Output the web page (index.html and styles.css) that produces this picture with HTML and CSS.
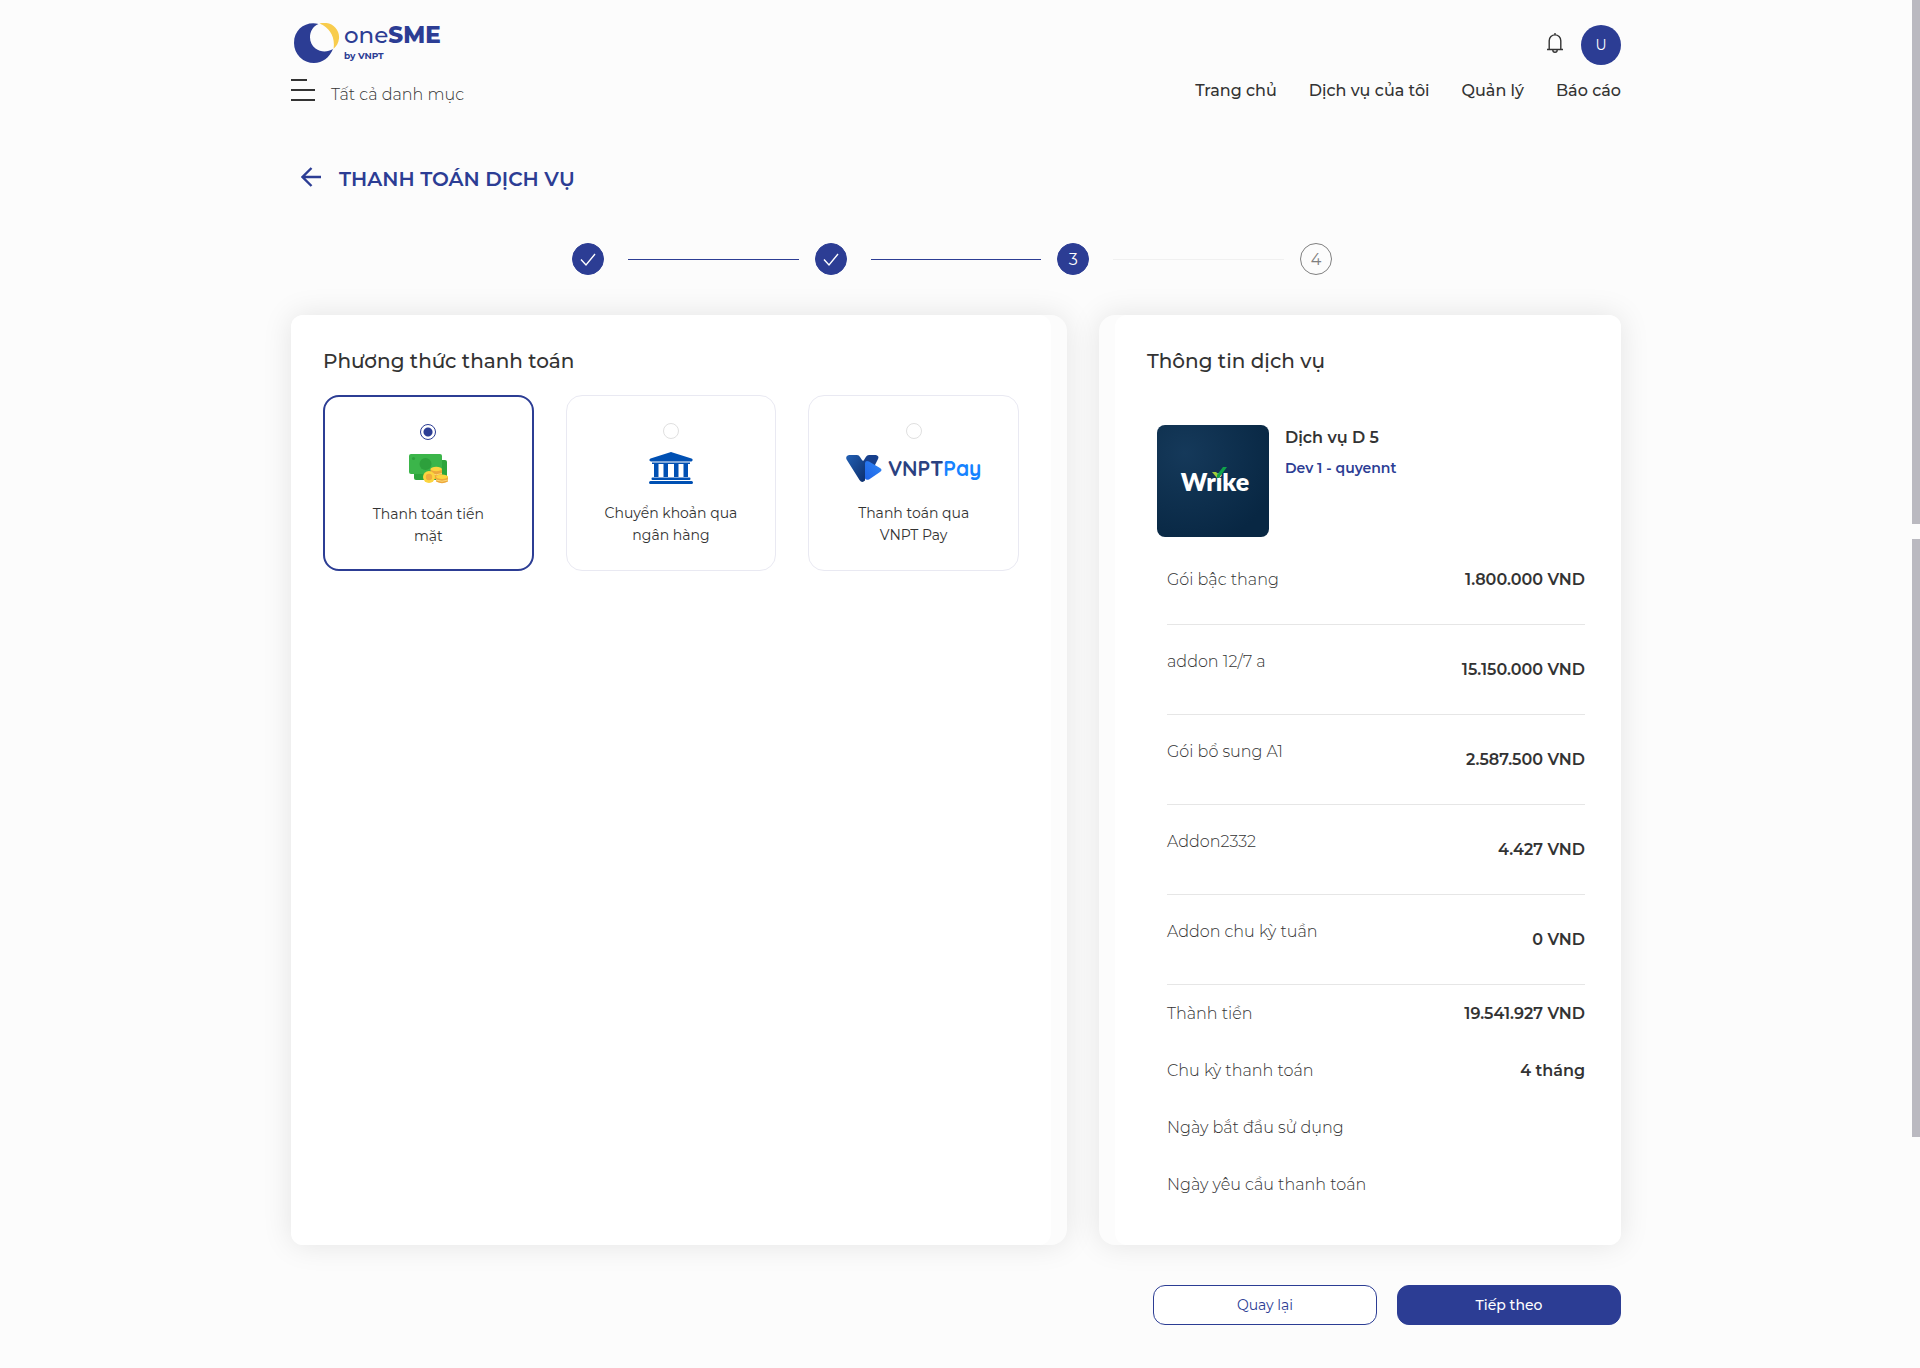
FILE: index.html
```html
<!DOCTYPE html>
<html lang="vi">
<head>
  <meta charset="utf-8">
  <meta name="viewport" content="width=device-width, initial-scale=1">
  <title>oneSME - Thanh toán dịch vụ</title>
  <link rel="stylesheet" href="styles.css">
</head>
<body>
  <div class="container">
    <header class="header">
      <div class="header-top">
        <a class="logo" href="#">
          <svg class="logo-mark" viewBox="0 0 46 40" aria-hidden="true">
            <path fill="#f8cc4d" d="M25.500 .5C36-2.500 46 5 45 15.500C44.500 20 42.500 23.500 39.500 25.800C41.500 14 36 5 25.500 .5Z"/>
            <path fill="#2c3d94" d="M24.500 1C14 5.500 13.500 20 21.500 25.500C27 29.500 34 29 39 26C35.500 34.500 28.500 40 20 40A20 20 0 0 1 0 20C0 6 12-2 24.500 1Z"/>
          </svg>
          <span class="logo-text">
            <span class="logo-name">one<b>SME</b></span>
            <span class="logo-by">by VNPT</span>
          </span>
        </a>
        <div class="account">
          <button class="bell" type="button" aria-label="Thông báo">
            <svg viewBox="0 0 16 20" width="16" height="20" fill="none" stroke="#333" stroke-width="1.400" aria-hidden="true">
              <path d="M8 0v2M0 16.500h16M2.200 16.500V7.700a5.800 5.800 0 0 1 11.600 0v8.800M5.800 17a2.200 2.200 0 0 0 4.400 0"/>
            </svg>
          </button>
          <button class="avatar" type="button">U</button>
        </div>
      </div>
      <div class="header-bottom">
        <button class="categories" type="button">
          <svg viewBox="0 0 24 22" width="24" height="22" stroke="#333" stroke-width="2" aria-hidden="true">
            <path d="M0 1h16M0 11h24M0 21h24"/>
          </svg>
          <span>Tất cả danh mục</span>
        </button>
        <nav class="nav">
          <a href="#">Trang chủ</a>
          <a href="#">Dịch vụ của tôi</a>
          <a href="#">Quản lý</a>
          <a href="#">Báo cáo</a>
        </nav>
      </div>
    </header>

    <main>
      <div class="page-title">
        <a class="back" href="#" aria-label="Trở về">
          <svg viewBox="0 0 20 20" width="20" height="20" fill="none" stroke="#2c3d94" stroke-width="2.400" aria-hidden="true">
            <path d="M20 10H2M10.500 1L1.500 10l9 9"/>
          </svg>
        </a>
        <h1>THANH TOÁN DỊCH VỤ</h1>
      </div>

      <ol class="steps">
        <li class="step done">
          <span class="dot"><svg viewBox="0 0 16 14" width="16" height="14" aria-label="Hoàn thành"><path d="M1 6.500l5 5.500L15 1"/></svg></span>
        </li>
        <li class="step done">
          <span class="dot"><svg viewBox="0 0 16 14" width="16" height="14" aria-label="Hoàn thành"><path d="M1 6.500l5 5.500L15 1"/></svg></span>
        </li>
        <li class="step current"><span class="dot">3</span></li>
        <li class="step"><span class="dot">4</span></li>
      </ol>

      <form class="checkout">
        <div class="columns">
          <section class="card card-methods">
            <div class="panel">
              <h2>Phương thức thanh toán</h2>
              <div class="methods">
                <label class="method">
                  <input type="radio" name="method" checked>
                  <svg class="method-icon" viewBox="0 0 39 32" width="39" height="32" aria-hidden="true">
                    <rect x="5" y="7" width="33" height="20" rx="2" fill="#2da53c"/>
                    <rect x="0" y="1" width="33" height="20" rx="2" fill="#3bb54a"/>
                    <circle cx="16.500" cy="11" r="6" fill="#2da03c"/>
                    <circle cx="4.500" cy="5.500" r="1.600" fill="#2da03c"/>
                    <path fill="#eda93b" d="M21.500 16h11.500v10h-11.500z"/>
                    <ellipse cx="27.200" cy="16" rx="5.700" ry="2.200" fill="#fcd53f"/>
                    <path d="M21.500 20.500q5.700 2.500 11.500 0" stroke="#fcd878" fill="none"/>
                    <circle cx="20" cy="24" r="6" fill="#fcd53f"/>
                    <circle cx="20" cy="24" r="3.200" fill="#f0ac3c"/>
                    <path fill="#eda93b" d="M27 23.500h12v5q-6 3.500-12 0z"/>
                    <ellipse cx="33" cy="23.700" rx="6" ry="2.200" fill="#fcd53f"/>
                    <path d="M27 27q6 2.500 12 0" stroke="#fcd878" fill="none"/>
                  </svg>
                  <span class="method-name">Thanh toán tiền mặt</span>
                </label>
                <label class="method">
                  <input type="radio" name="method">
                  <svg class="method-icon" viewBox="0 0 44 32" width="44" height="32" fill="#0050b3" aria-hidden="true">
                    <path d="M20.500.4q1.500-.6 3 0L42.500 6.500q1.500.6 1 2t-2 1h-39q-1.500 0-2-1t1-2zM3 10.500h38v1.500H3zM5 12h4.500v13H5zM14.500 12h4.500v13h-4.500zM25 12h4.500v13H25zM34.500 12h4.500v13h-4.500zM3.500 25.500h37q1 0 1 1.200T40.500 28h-37q-1 0-1-1.300t1-1.200zM1.500 29h41q1.500 0 1.500 1.500T42.500 32h-41Q0 32 0 30.500T1.500 29z"/>
                  </svg>
                  <span class="method-name">Chuyển khoản qua ngân hàng</span>
                </label>
                <label class="method">
                  <input type="radio" name="method">
                  <span class="method-icon vnptpay">
                    <svg viewBox="0 0 36 27" width="36" height="27" aria-hidden="true">
                      <defs>
                        <linearGradient id="pay-v" x1="0" y1="0" x2="1" y2="1"><stop offset="0" stop-color="#2260b4"/><stop offset="1" stop-color="#0d2f6d"/></linearGradient>
                        <linearGradient id="pay-p" x1="1" y1="0" x2="0" y2="1"><stop offset="0" stop-color="#2f86f6"/><stop offset="1" stop-color="#1f63e6"/></linearGradient>
                      </defs>
                      <path fill="#173f8c" d="M14 5.500q2.500 2 4-.5L20 1.800Q21 0 23 0h7q3.500 1 2 4L28 12l-10 6z"/>
                      <path fill="url(#pay-v)" d="M3 0h8q2 0 3 2l2 3q1.500 2 3 1.200V25.500q-3 3-5.500-.5L.6 4.500Q-1 1 3 0z"/>
                      <path fill="url(#pay-p)" d="M19 8q.500-3 4-1.500l11 6.500q3 2 0 4l-11 7.500q-3 1-4-1z"/>
                    </svg>
                    <span>VNPT<em>Pay</em></span>
                  </span>
                  <span class="method-name">Thanh toán qua VNPT Pay</span>
                </label>
              </div>
            </div>
          </section>

          <section class="card card-service">
            <div class="panel">
              <h2>Thông tin dịch vụ</h2>
              <div class="service">
                <div class="thumb">
                  <span class="wrike">Wrike
                    <svg class="tick" viewBox="0 0 15 11" width="15" height="11" aria-hidden="true"><path fill="#a0ce3a" d="M0 5h4l3 3v3H5z"/><path fill="#0fa14a" d="M5 8l6-8h4L7 11H5z"/></svg>
                  </span>
                </div>
                <div class="service-text">
                  <h3>Dịch vụ D 5</h3>
                  <a href="#">Dev 1 - quyennt</a>
                </div>
              </div>
              <dl class="items">
                <div class="item item-first"><dt>Gói bậc thang</dt><dd>1.800.000 VND</dd></div>
                <div class="item"><dt>addon 12/7 a</dt><dd>15.150.000 VND</dd></div>
                <div class="item"><dt>Gói bổ sung A1</dt><dd>2.587.500 VND</dd></div>
                <div class="item"><dt>Addon2332</dt><dd>4.427 VND</dd></div>
                <div class="item"><dt>Addon chu kỳ tuần</dt><dd>0 VND</dd></div>
              </dl>
              <dl class="totals">
                <div class="total"><dt>Thành tiền</dt><dd>19.541.927 VND</dd></div>
                <div class="total"><dt>Chu kỳ thanh toán</dt><dd>4 tháng</dd></div>
                <div class="total"><dt>Ngày bắt đầu sử dụng</dt><dd></dd></div>
                <div class="total"><dt>Ngày yêu cầu thanh toán</dt><dd></dd></div>
              </dl>
            </div>
          </section>
        </div>

        <div class="actions">
          <button class="btn btn-outline" type="button">Quay lại</button>
          <button class="btn btn-primary" type="submit">Tiếp theo</button>
        </div>
      </form>
    </main>
  </div>
  <div class="rail" aria-hidden="true"><i class="rail-upper"></i><i class="rail-lower"></i></div>
</body>
</html>
```
FILE: styles.css
```css
:root {
  --primary: #2c3d94;
  --text: #333;
  --line: #e6e6e6;
}

* {
  box-sizing: border-box;
}

body {
  margin: 0;
  padding-right: 8px;
  background: #fcfcfc;
  color: var(--text);
  font: 400 16px/24px Montserrat, Inter, "Noto Sans", sans-serif;
}

h1, h2, h3, dl, dd, ol {
  margin: 0;
  padding: 0;
}

button {
  padding: 0;
  border: 0;
  background: none;
  color: inherit;
  font: inherit;
  cursor: pointer;
}

a {
  color: inherit;
  text-decoration: none;
}

svg {
  display: block;
  flex: none;
}

.container {
  max-width: 1330px;
  margin: 0 auto;
}

/* Header */
.header {
  padding-top: 23px;
}

.header-top,
.header-bottom {
  display: flex;
  justify-content: space-between;
}

.header-top {
  height: 44px;
}

.logo {
  display: flex;
  gap: 4px;
  padding-left: 3px;
  color: var(--primary);
}

.logo-mark {
  width: 46px;
  height: 40px;
}

.logo-text {
  display: flex;
  flex-direction: column;
}

.logo-name {
  font-size: 23px;
  font-weight: 500;
  line-height: 24px;
}

.logo-name b {
  font-weight: 800;
}

.logo-by {
  font-size: 9px;
  font-weight: 700;
  line-height: 17px;
}

.account {
  display: flex;
  align-items: center;
  gap: 18px;
}

.bell {
  padding-bottom: 4px;
}

.avatar {
  width: 40px;
  height: 40px;
  border-radius: 50%;
  background: var(--primary);
  color: #fff;
  font-size: 14px;
}

.header-bottom {
  align-items: center;
  height: 46px;
}

.categories {
  display: flex;
  align-items: center;
  gap: 16px;
  font-weight: 300;
}

.categories span {
  padding-top: 9px;
}

.nav {
  display: flex;
  gap: 32px;
  padding-top: 2px;
  font-weight: 500;
}

/* Title and steps */
.page-title {
  display: flex;
  align-items: center;
  gap: 18px;
  padding: 53px 0 0 10px;
}

.back {
  padding-bottom: 4px;
}

h1 {
  color: var(--primary);
  font-size: 20px;
  font-weight: 600;
  line-height: 26px;
}

.steps {
  display: flex;
  max-width: 800px;
  margin: 51px auto 40px;
  list-style: none;
}

.step {
  display: flex;
  flex: 1;
  align-items: center;
  gap: 24px;
  margin-left: 16px;
}

.step::after {
  content: "";
  flex: 1;
  height: 1px;
  background: #f0f0f0;
}

.step.done::after {
  background: var(--primary);
}

.step:last-child {
  flex: none;
}

.dot {
  display: flex;
  align-items: center;
  justify-content: center;
  width: 32px;
  height: 32px;
  padding-top: 2px;
  border: 1px solid #808080;
  border-radius: 50%;
  color: #808080;
}

.done .dot,
.current .dot {
  border-color: var(--primary);
  background: var(--primary);
  color: #fff;
}

.dot path {
  fill: none;
  stroke: #fff;
  stroke-width: 1.4;
}

/* Cards */
.columns {
  display: grid;
  grid-template-columns: 776fr 522fr;
  gap: 32px;
}

.card {
  display: flex;
  border-radius: 12px;
  background: #fcfcfc;
  box-shadow: 0 0 30px rgba(0, 0, 0, 0.1);
}

.card-methods {
  padding-right: 16px;
  border-radius: 12px 16px 16px 12px;
}

.card-service {
  padding-left: 16px;
  border-radius: 16px 12px 12px 16px;
}

.panel {
  flex: 1;
  min-width: 0;
  padding: 32px;
  border-radius: 12px;
  background: #fff;
}

h2 {
  font-size: 20px;
  font-weight: 500;
  line-height: 28px;
}

.methods {
  display: grid;
  grid-template-columns: repeat(3, 1fr);
  gap: 32px;
  margin-top: 20px;
}

.method {
  display: flex;
  flex-direction: column;
  align-items: center;
  height: 176px;
  padding: 27px 32px 0;
  border: 1px solid #e9e9f2;
  border-radius: 16px;
  cursor: pointer;
}

.method:has(input:checked) {
  border: 2px solid var(--primary);
}

.method input {
  appearance: none;
  flex: none;
  width: 16px;
  height: 16px;
  margin: 0 0 13px;
  border: 1px solid #e0e0e0;
  border-radius: 50%;
  background: #fff;
}

.method input:checked {
  border-color: var(--primary);
  background: radial-gradient(circle, var(--primary) 4px, #fff 5px);
}

.method-icon {
  height: 32px;
}

.method-name {
  max-width: 140px;
  margin-top: 18px;
  font-size: 14px;
  line-height: 22px;
  text-align: center;
}

.vnptpay {
  display: flex;
  align-items: center;
  gap: 6px;
  color: #2b4181;
  font: 700 21px/32px Quicksand, Lato, sans-serif;
}

.vnptpay em {
  color: #1683ff;
  font-style: normal;
}

/* Service summary */
.service {
  display: flex;
  gap: 16px;
  margin: 50px 0 0 10px;
}

.thumb {
  display: flex;
  align-items: center;
  justify-content: center;
  width: 112px;
  height: 112px;
  border-radius: 8px;
  background: radial-gradient(circle at 25% 25%, #15395a, #082743 80%);
}

.wrike {
  position: relative;
  padding-left: 4px;
  color: #fff;
  font: 800 25px/28px Lato, sans-serif;
}

.tick {
  position: absolute;
  top: 0;
  left: 35px;
}

.service-text {
  padding-top: 1px;
}

h3,
.service-text a {
  display: block;
  font-size: 16px;
  font-weight: 600;
  line-height: 24px;
}

.service-text a {
  margin-top: 7px;
  color: var(--primary);
  font-size: 14px;
  line-height: 22px;
}

.card-service .panel {
  padding-right: 36px;
}

.items,
.totals {
  margin-left: 20px;
}

.items {
  margin-top: 31px;
}

.item,
.total {
  display: flex;
  justify-content: space-between;
}

.item {
  height: 90px;
  padding-top: 25px;
  border-bottom: 1px solid var(--line);
}

.item-first {
  height: 57px;
  padding-top: 0;
}

.item dd {
  padding-top: 8px;
}

.item-first dd {
  padding-top: 0;
}

dt {
  font-weight: 300;
}

dd {
  font-weight: 600;
}

.totals {
  display: grid;
  gap: 33px;
  padding: 17px 0 16px;
}

/* Actions */
.actions {
  display: flex;
  justify-content: flex-end;
  gap: 20px;
  padding: 40px 0 42px;
}

.btn {
  width: 224px;
  height: 40px;
  border: 1px solid var(--primary);
  border-radius: 12px;
  font-size: 14px;
}

.btn-outline {
  background: #fff;
  color: var(--primary);
}

.btn-primary {
  background: var(--primary);
  color: #fff;
  font-weight: 500;
}

/* Scroll rail over the page's right edge */
.rail {
  position: fixed;
  inset: 0 0 0 auto;
  display: grid;
  grid-template-rows: 524fr 15fr 598fr 231fr;
  width: 8px;
}

.rail-upper,
.rail-lower {
  background: #bab9c0;
}

.rail-lower {
  grid-row: 3;
}
```
